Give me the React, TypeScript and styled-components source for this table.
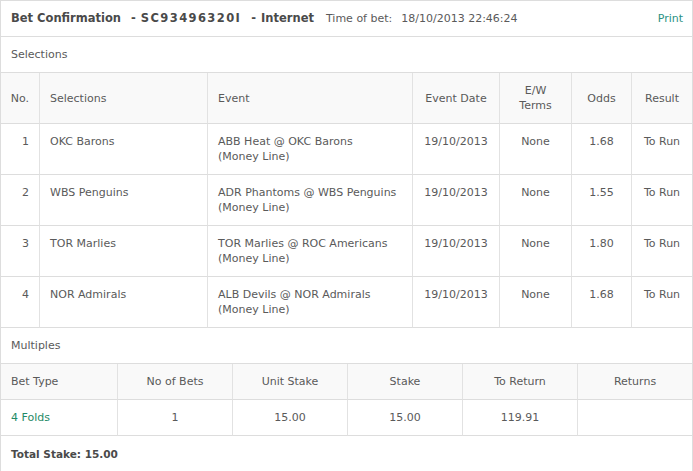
import styled, { createGlobalStyle } from 'styled-components';

const GlobalStyle = createGlobalStyle`
  body {
    margin: 0;
    background: #fff;
    font-family: "DejaVu Sans", Verdana, sans-serif;
    font-size: 11px;
    color: #555;
  }
`;

const selections = [
  { no: 1, name: 'OKC Barons', event: 'ABB Heat @ OKC Barons', date: '19/10/2013', ew: 'None', odds: '1.68', result: 'To Run' },
  { no: 2, name: 'WBS Penguins', event: 'ADR Phantoms @ WBS Penguins', date: '19/10/2013', ew: 'None', odds: '1.55', result: 'To Run' },
  { no: 3, name: 'TOR Marlies', event: 'TOR Marlies @ ROC Americans', date: '19/10/2013', ew: 'None', odds: '1.80', result: 'To Run' },
  { no: 4, name: 'NOR Admirals', event: 'ALB Devils @ NOR Admirals', date: '19/10/2013', ew: 'None', odds: '1.68', result: 'To Run' },
];

const SEL_COLS = '39px 168px 205px 87px 72px 60px 60px';
const MULT_COLS = '117px 115px 115px 115px 115px 114px';

export default function App() {
  return (
    <>
      <GlobalStyle />
      <Panel>
        <TitleBar>
          <Title>
            Bet Confirmation
            <Sep>-</Sep>
            <BetRef>SC93496320I</BetRef>
            <Sep>-</Sep>
            Internet
          </Title>
          <TimeLabel>Time of bet:</TimeLabel>
          <TimeValue>18/10/2013 22:46:24</TimeValue>
          <PrintLink href="#">Print</PrintLink>
        </TitleBar>

        <SectionLabel>Selections</SectionLabel>

        <Row $cols={SEL_COLS} $height={51} $head>
          <Cell $align="right">No.</Cell>
          <Cell>Selections</Cell>
          <Cell>Event</Cell>
          <Cell $align="center">Event Date</Cell>
          <Cell $align="center">E/W<br />Terms</Cell>
          <Cell $align="center">Odds</Cell>
          <Cell $align="center" $last>Result</Cell>
        </Row>
        {selections.map(s => (
          <Row key={s.no} $cols={SEL_COLS} $height={51}>
            <Cell $align="right" $top>{s.no}</Cell>
            <Cell $top>{s.name}</Cell>
            <Cell $top>{s.event}<br />(Money Line)</Cell>
            <Cell $align="center" $top>{s.date}</Cell>
            <Cell $align="center" $top>{s.ew}</Cell>
            <Cell $align="center" $top>{s.odds}</Cell>
            <Cell $align="center" $top $last>{s.result}</Cell>
          </Row>
        ))}

        <SectionLabel>Multiples</SectionLabel>

        <Row $cols={MULT_COLS} $height={36} $head>
          <Cell>Bet Type</Cell>
          <Cell $align="center">No of Bets</Cell>
          <Cell $align="center">Unit Stake</Cell>
          <Cell $align="center">Stake</Cell>
          <Cell $align="center">To Return</Cell>
          <Cell $align="center" $last>Returns</Cell>
        </Row>
        <Row $cols={MULT_COLS} $height={36}>
          <Cell><BetType>4 Folds</BetType></Cell>
          <Cell $align="center">1</Cell>
          <Cell $align="center">15.00</Cell>
          <Cell $align="center">15.00</Cell>
          <Cell $align="center">119.91</Cell>
          <Cell $align="center" $last></Cell>
        </Row>

        <TotalBar>Total Stake: 15.00</TotalBar>
      </Panel>
    </>
  );
}

const Panel = styled.div`
  width: 693px;
  box-sizing: border-box;
  border: 1px solid #dddddd;
  border-bottom: none;
  background: #fff;
`;

const TitleBar = styled.div`
  height: 36px;
  box-sizing: border-box;
  border-bottom: 1px solid #dddddd;
  display: flex;
  align-items: center;
  padding: 0 9px 0 10px;
  line-height: 15px;
`;

const Title = styled.span`
  display: flex;
  align-items: baseline;
  font-weight: bold;
  font-size: 11.5px;
  color: #4a4a4a;
  white-space: nowrap;
`;

const Sep = styled.span`
  margin: 0 5px 0 10px;
`;

const BetRef = styled.span`
  letter-spacing: 1.4px;
`;

const TimeLabel = styled.span`
  margin-left: 12px;
  color: #5a5a5a;
`;

const TimeValue = styled.span`
  margin-left: 9px;
  color: #5a5a5a;
`;

const PrintLink = styled.a`
  margin-left: auto;
  color: #2a9282;
  text-decoration: none;
`;

const SectionLabel = styled.div`
  height: 36px;
  box-sizing: border-box;
  border-bottom: 1px solid #dddddd;
  display: flex;
  align-items: center;
  padding-left: 10px;
  color: #5a5a5a;
`;

const Row = styled.div<{ $cols: string; $height: number; $head?: boolean }>`
  display: grid;
  grid-template-columns: ${p => p.$cols};
  height: ${p => p.$height}px;
  background: ${p => (p.$head ? '#f9f9f9' : '#fff')};
`;

const Cell = styled.div<{ $align?: 'left' | 'center' | 'right'; $top?: boolean; $last?: boolean }>`
  box-sizing: border-box;
  border-bottom: 1px solid #dddddd;
  border-right: ${p => (p.$last ? 'none' : '1px solid #e2e2e2')};
  padding: ${p => (p.$top ? '10px 10px 0' : '0 10px')};
  line-height: 15px;
  text-align: ${p => p.$align || 'left'};
  display: flex;
  flex-direction: column;
  justify-content: ${p => (p.$top ? 'flex-start' : 'center')};
  align-items: ${p =>
    p.$align === 'center' ? 'center' : p.$align === 'right' ? 'flex-end' : 'flex-start'};
  color: #5a5a5a;
  white-space: nowrap;
`;

const BetType = styled.span`
  color: #1f8a66;
`;

const TotalBar = styled.div`
  height: 36px;
  box-sizing: border-box;
  display: flex;
  align-items: center;
  padding-left: 10px;
  font-weight: bold;
  font-size: 10.5px;
  color: #4a4a4a;
`;
